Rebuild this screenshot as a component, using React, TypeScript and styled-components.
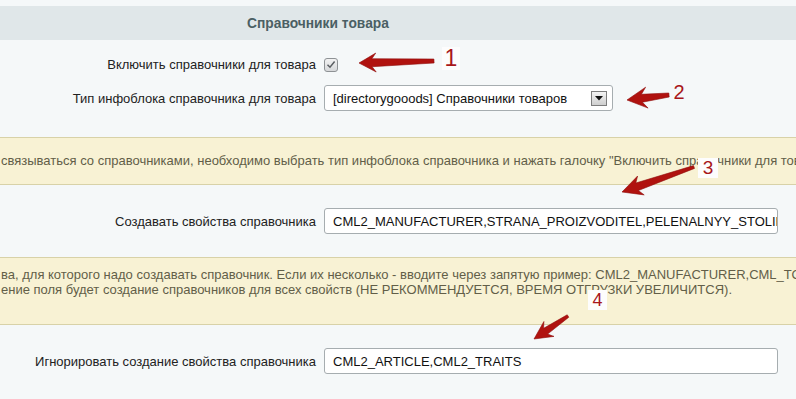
import React from "react";
import styled, { createGlobalStyle } from "styled-components";

const Global = createGlobalStyle`
  html, body { margin: 0; padding: 0; background: #f5f8f9; }
  body { font-family: Arial, "Liberation Sans", sans-serif; font-size: 13px; color: #222; }
  #root { width: 796px; height: 399px; overflow: hidden; }
`;

const Page = styled.div`
  position: relative;
  width: 796px;
  height: 399px;
  overflow: hidden;
  background: #f5f8f9;
  padding-top: 6px;
  box-sizing: border-box;
  display: flex;
  flex-direction: column;
`;

const Header = styled.div`
  height: 34px;
  background: #e0e7e9;
  display: flex;
  align-items: center;
  padding-left: 247px;
  font-weight: bold;
  font-size: 13.8px;
  color: #4b5f64;
  flex-shrink: 0;
`;

const Row = styled.div<{ $top: number }>`
  display: grid;
  grid-template-columns: 316px 1fr;
  column-gap: 8px;
  align-items: center;
  margin-top: ${(p) => p.$top}px;
  flex-shrink: 0;
`;

const Label = styled.div`
  text-align: right;
  color: #222;
  white-space: nowrap;
`;

const Check = styled.span`
  width: 14px;
  height: 14px;
  box-sizing: border-box;
  border: 1px solid #8e9295;
  border-radius: 3px;
  background: linear-gradient(#f2f2f2, #d6d8da);
  display: flex;
  align-items: center;
  justify-content: center;
`;

const Select = styled.div`
  width: 289px;
  height: 26px;
  box-sizing: border-box;
  border: 1px solid #a6adb0;
  border-radius: 3px;
  background: #fff;
  display: flex;
  align-items: center;
  justify-content: space-between;
  padding: 0 5px 0 8px;
  color: #111;
`;

const DropButton = styled.span`
  width: 16px;
  height: 15px;
  box-sizing: border-box;
  border: 1px solid #7d7d7d;
  background: linear-gradient(#f4f4f4, #cfcfcf);
  display: flex;
  align-items: center;
  justify-content: center;
`;

const Input = styled.div`
  width: 454px;
  height: 26px;
  box-sizing: border-box;
  border: 1px solid #a6adb0;
  border-radius: 3px;
  background: #fff;
  display: flex;
  align-items: center;
  padding: 0 8px;
  color: #111;
  white-space: nowrap;
  overflow: hidden;
`;

const Notice = styled.div<{ $top: number; $pt: number; $pb: number }>`
  margin-top: ${(p) => p.$top}px;
  background: #f8f2d4;
  border-top: 1px solid #d8d2a8;
  border-bottom: 1px solid #d8d2a8;
  padding: ${(p) => p.$pt}px 0 ${(p) => p.$pb}px 1px;
  color: #625e48;
  line-height: 15px;
  white-space: nowrap;
  overflow: hidden;
  flex-shrink: 0;
`;

const Overlay = styled.svg`
  position: absolute;
  left: 0;
  top: 0;
  pointer-events: none;
`;

const Badge = styled.div<{ $x: number; $y: number; $w: number; $h: number; $fs: number; $bg: boolean }>`
  position: absolute;
  left: ${(p) => p.$x}px;
  top: ${(p) => p.$y}px;
  width: ${(p) => p.$w}px;
  height: ${(p) => p.$h}px;
  background: ${(p) => (p.$bg ? "#fdfdfd" : "transparent")};
  color: #a8171a;
  font-size: ${(p) => p.$fs}px;
  font-family: Arial, "Liberation Sans", sans-serif;
  display: flex;
  align-items: center;
  justify-content: center;
`;

type Pt = [number, number];

function arrowPoints(tail: Pt, tip: Pt, h: number, hw: number, w0: number, w1: number, barb: number) {
  const dx = tip[0] - tail[0];
  const dy = tip[1] - tail[1];
  const L = Math.hypot(dx, dy);
  const ux = dx / L;
  const uy = dy / L;
  const nx = -uy;
  const ny = ux;
  const loc: Pt[] = [
    [0, -w0 / 2],
    [L - h, -w1 / 2],
    [L - h - barb, -hw],
    [L, 0],
    [L - h - barb, hw],
    [L - h, w1 / 2],
    [0, w0 / 2],
  ];
  return loc
    .map(([a, b]) => `${(tail[0] + ux * a + nx * b).toFixed(1)},${(tail[1] + uy * a + ny * b).toFixed(1)}`)
    .join(" ");
}

const arrows = [
  { tail: [434, 61] as Pt, tip: [359, 63] as Pt, h: 13, hw: 9.5, w0: 4, w1: 8, barb: 4 },
  { tail: [669, 95] as Pt, tip: [627, 100] as Pt, h: 15, hw: 10.5, w0: 4, w1: 8, barb: 5 },
  { tail: [694, 167] as Pt, tip: [622, 192] as Pt, h: 16, hw: 10, w0: 3, w1: 8, barb: 4 },
  { tail: [568, 316] as Pt, tip: [534, 339] as Pt, h: 14, hw: 9, w0: 3, w1: 7, barb: 4 },
];

export default function App() {
  return (
    <>
      <Global />
      <Page>
        <Header>Справочники товара</Header>
        <Row $top={17}>
          <Label>Включить справочники для товара</Label>
          <Check>
            <svg width="10" height="9" viewBox="0 0 10 9">
              <path d="M1.5 4.8 L4 7.2 L8.6 1.6" fill="none" stroke="#5a5e62" strokeWidth="1.5" />
            </svg>
          </Check>
        </Row>
        <Row $top={13}>
          <Label>Тип инфоблока справочника для товара</Label>
          <Select>
            <span>[directorygooods] Справочники товаров</span>
            <DropButton>
              <svg width="8" height="5" viewBox="0 0 8 5">
                <path d="M0 0 L8 0 L4 4.5 Z" fill="#111" />
              </svg>
            </DropButton>
          </Select>
        </Row>
        <Notice $top={26} $pt={15} $pb={16}>
          связываться со справочниками, необходимо выбрать тип инфоблока справочника и нажать галочку "Включить справочники для товара"
        </Notice>
        <Row $top={23}>
          <Label>Создавать свойства справочника</Label>
          <Input>CML2_MANUFACTURER,STRANA_PROIZVODITEL,PELENALNYY_STOLIK</Input>
        </Row>
        <Notice $top={23} $pt={9} $pb={27}>
          ва, для которого надо создавать справочник. Если их несколько - вводите через запятую пример: CML2_MANUFACTURER,CML_TOVAR
          <br />
          ение поля будет создание справочников для всех свойств (НЕ РЕКОММЕНДУЕТСЯ, ВРЕМЯ ОТГРУЗКИ УВЕЛИЧИТСЯ).
        </Notice>
        <Row $top={23}>
          <Label>Игнорировать создание свойства справочника</Label>
          <Input>CML2_ARTICLE,CML2_TRAITS</Input>
        </Row>
        <Overlay width="796" height="399" viewBox="0 0 796 399">
          {arrows.map((a, i) => (
            <polygon
              key={i}
              points={arrowPoints(a.tail, a.tip, a.h, a.hw, a.w0, a.w1, a.barb)}
              fill="#b0120f"
              stroke="#8e0d0b"
              strokeWidth="0.6"
              strokeLinejoin="round"
            />
          ))}
        </Overlay>
        <Badge $x={442} $y={47} $w={18} $h={23} $fs={23} $bg>1</Badge>
        <Badge $x={669} $y={81} $w={20} $h={22} $fs={20} $bg={false}>2</Badge>
        <Badge $x={698} $y={158} $w={20} $h={20} $fs={19} $bg>3</Badge>
        <Badge $x={588} $y={290} $w={19} $h={20} $fs={18} $bg>4</Badge>
      </Page>
    </>
  );
}
